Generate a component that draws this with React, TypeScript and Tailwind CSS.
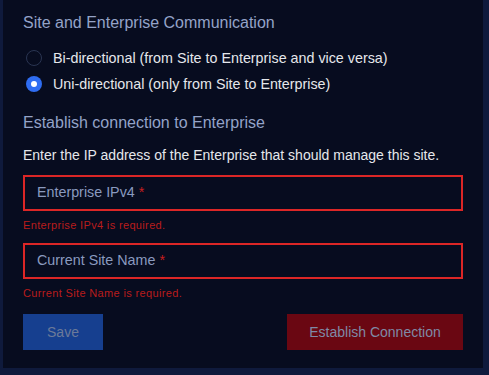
export default function App() {
  return (
    <main className="min-h-screen bg-[#0f1a3c] pl-[3px] pr-[6px] pb-[7px] font-['Liberation_Sans',Arial,sans-serif]">
      <section className="w-[480px] h-[368px] bg-[#070c1f] px-5 pt-[12px]">
        {/* Communication mode */}
        <h2 className="text-[16px] leading-[22px] text-[#94a3c8]">Site and Enterprise Communication</h2>
        <div className="mt-[16px] flex flex-col gap-[10px]">
          <label className="flex items-center gap-[11px] pl-[3px] text-[14.3px] leading-[16px] text-[#e5e7eb]">
            <span className="w-4 h-4 rounded-full border border-[#2a3552] bg-[#070c1f]" />
            Bi-directional (from Site to Enterprise and vice versa)
          </label>
          <label className="flex items-center gap-[11px] pl-[3px] text-[14.3px] leading-[16px] text-[#e5e7eb]">
            <span className="w-4 h-4 rounded-full bg-[#2f6df2] flex items-center justify-center">
              <span className="w-[6px] h-[6px] rounded-full bg-white" />
            </span>
            Uni-directional (only from Site to Enterprise)
          </label>
        </div>

        {/* Connection */}
        <h2 className="mt-[20px] text-[16px] leading-[22px] text-[#94a3c8]">Establish connection to Enterprise</h2>
        <p className="mt-[13px] text-[14px] leading-[16px] text-[#e5e7eb]">
          Enter the IP address of the Enterprise that should manage this site.
        </p>

        <div className="mt-[12px] h-9 border-2 border-[#dc2626] flex items-center px-3 text-[14.3px] text-[#8a9abf]">
          Enterprise IPv4 <span className="ml-1 text-[#c81e1e]">*</span>
        </div>
        <p className="mt-[7px] text-[11px] leading-[14px] tracking-[0.35px] text-[#b91c1c]">Enterprise IPv4 is required.</p>

        <div className="mt-[11px] h-9 border-2 border-[#dc2626] flex items-center px-3 text-[14.3px] text-[#8a9abf]">
          Current Site Name <span className="ml-1 text-[#c81e1e]">*</span>
        </div>
        <p className="mt-[7px] text-[11px] leading-[14px] tracking-[0.35px] text-[#b91c1c]">Current Site Name is required.</p>

        <div className="mt-[14px] flex justify-between">
          <button className="w-20 h-9 bg-[#163f8f] text-[14px] text-[#6b7a99]">Save</button>
          <button className="w-[176px] h-9 bg-[#6a0712] text-[14px] text-[#7f8aa6]">Establish Connection</button>
        </div>
      </section>
    </main>
  );
}
